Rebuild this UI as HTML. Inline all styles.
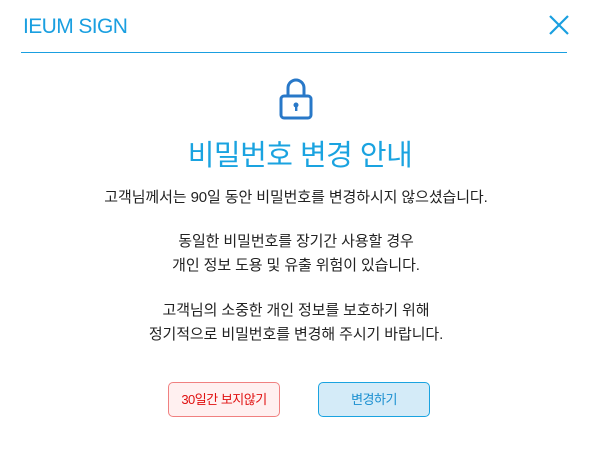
<!DOCTYPE html>
<html><head><meta charset="utf-8"><style>
body{margin:0;width:590px;height:450px;background:#fff;position:relative;font-family:"Liberation Sans","Noto Sans CJK KR",sans-serif;overflow:hidden}
.t{position:absolute;left:23px;top:15px;font-size:21px;color:#1a9fe0;letter-spacing:-0.6px}
.line{position:absolute;left:21px;top:52px;width:546px;height:1px;background:#1a9fe0}
.h{position:absolute;left:5px;width:590px;top:132px;text-align:center;font-size:29px;color:#1aa3e0;letter-spacing:-0.5px}
.p{position:absolute;left:1px;width:590px;text-align:center;font-size:15px;color:#222;line-height:24px;letter-spacing:-0.1px}
.b{position:absolute;height:35px;border-radius:5px;box-sizing:border-box;font-size:13px;text-align:center;line-height:33px;letter-spacing:-0.5px}
</style></head><body>
<div class="t">IEUM SIGN</div>
<svg style="position:absolute;left:548px;top:14px" width="22" height="22"><path d="M2 2L20 20M20 2L2 20" stroke="#1a9fe0" stroke-width="2.2"/></svg>
<div class="line"></div>
<svg style="position:absolute;left:278px;top:74px" width="40" height="46"><path d="M10 22V14a8 8 0 0 1 16 0v8" fill="none" stroke="#2878c8" stroke-width="3"/><rect x="3" y="22" width="30" height="22" rx="3" fill="none" stroke="#2878c8" stroke-width="3"/><circle cx="18" cy="31" r="2.5" fill="#2878c8"/><rect x="17" y="31" width="2.4" height="6" fill="#2878c8"/></svg>
<div class="h">비밀번호 변경 안내</div>
<div class="p" style="top:186px">고객님께서는 90일 동안 비밀번호를 변경하시지 않으셨습니다.</div>
<div class="p" style="top:230px">동일한 비밀번호를 장기간 사용할 경우<br>개인 정보 도용 및 유출 위험이 있습니다.</div>
<div class="p" style="top:299px">고객님의 소중한 개인 정보를 보호하기 위해<br>정기적으로 비밀번호를 변경해 주시기 바랍니다.</div>
<div class="b" style="left:168px;top:382px;width:112px;background:#fff0f0;border:1px solid #f08080;color:#e01010">30일간 보지않기</div>
<div class="b" style="left:318px;top:382px;width:112px;background:#d4ebf8;border:1px solid #1aa3e0;color:#1a8fd0">변경하기</div>
</body></html>
